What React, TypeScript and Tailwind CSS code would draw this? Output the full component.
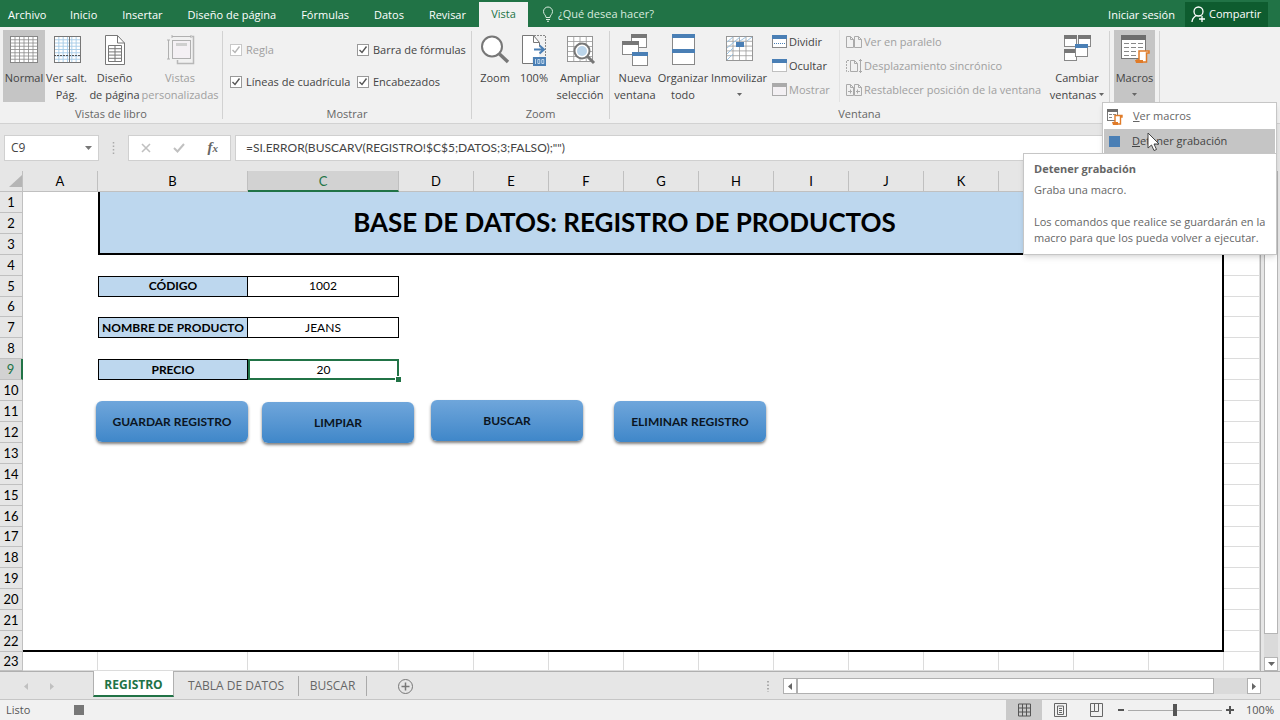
import type { ReactNode } from 'react';

type IconProps = { children: ReactNode; w?: number; h?: number };

const Svg = ({ children, w = 32, h = 32 }: IconProps) => (
  <svg width={w} height={h} viewBox={`0 0 ${w} ${h}`} fill="none" className="shrink-0" aria-hidden="true">
    {children}
  </svg>
);

const grid = (x: number, y: number, cols: number, rows: number, cw: number, rh: number) => {
  let d = '';
  for (let i = 0; i <= cols; i++) d += `M${x + i * cw} ${y}V${y + rows * rh}`;
  for (let i = 0; i <= rows; i++) d += `M${x} ${y + i * rh}H${x + cols * cw}`;
  return d;
};

const NormalIcon = () => (
  <Svg>
    <rect x="2.5" y="2.5" width="27" height="26" fill="#fff" stroke="#777" />
    <path d={grid(2.5, 2.5, 6, 8, 4.5, 3.25)} stroke="#8a8a8a" strokeWidth="0.8" />
  </Svg>
);

const BreaksIcon = () => (
  <Svg>
    <rect x="3.5" y="2.5" width="26" height="26" fill="#fff" />
    <path d={grid(3.5, 2.5, 6, 8, 4.33, 3.25)} stroke="#a5cbe6" strokeWidth="0.9" />
    <rect x="3.5" y="2.5" width="26" height="26" stroke="#777" />
    <path d="M18.5 2V29" stroke="#777" />
    <path d="M3 21.5H30" stroke="#555" strokeDasharray="2 1" />
  </Svg>
);

const PageIcon = () => (
  <Svg>
    <path d="M6.5 1.5H18.5L25.5 9V30.5H6.5Z" fill="#fff" stroke="#777" />
    <path d="M18.5 1.5V9H25.5" stroke="#777" />
    <path d={grid(9.5, 11.5, 2, 5, 6.5, 3.2)} stroke="#777" />
  </Svg>
);

const CustomViewsIcon = () => (
  <Svg>
    <rect x="8.5" y="6.5" width="18" height="18" stroke="#b0b0b0" fill="#f4f0f4" />
    <rect x="12" y="9" width="11" height="3" fill="#cfcfcf" />
    <path d="M8 2.5H27M8 1V4M27 1V4M4.5 6V25M3 6H6M3 25H6" stroke="#b0b0b0" />
    <path d="M28 2.5H29.5V29.5H13.5V26" stroke="#b8b8b8" strokeWidth="1.5" />
  </Svg>
);

const ZoomIcon = () => (
  <Svg>
    <circle cx="13" cy="12.5" r="10" fill="#fff" stroke="#777" strokeWidth="2" />
    <path d="M20.5 20L29 28" stroke="#777" strokeWidth="3.5" />
  </Svg>
);

const HundredIcon = () => (
  <Svg w={28}>
    <path d="M3 2H13L19 9V23H12V29H3Z" fill="#fff" />
    <path d="M19.5 12V8.5L13.5 1.5H2.5V29.5H13" stroke="#777" />
    <path d="M13.5 1.5V8.5H19" stroke="#777" />
    <path d="M14 1.5H25.5V22" stroke="#888" strokeDasharray="2 1" />
    <path d="M14 15.5H23M19.5 11.5L24 15.5L19.5 19.5" stroke="#4a7fb5" strokeWidth="2" />
    <rect x="13" y="23" width="13" height="9" fill="#4a7fb5" />
    <path d="M15.5 25V30M17.8 25.5H19.8V29.5H17.8ZM21.8 25.5H23.8V29.5H21.8Z" stroke="#dcebf7" strokeWidth="0.8" />
  </Svg>
);

const ZoomSelIcon = () => (
  <Svg>
    <rect x="3.5" y="2.5" width="25" height="25" fill="#fff" stroke="#888" />
    <path d={grid(3.5, 2.5, 4, 5, 6.25, 5)} stroke="#999" strokeWidth="0.8" />
    <circle cx="18" cy="17" r="7.5" fill="#fff" stroke="#777" strokeWidth="2" />
    <circle cx="18" cy="17" r="5" fill="#bcd5ea" />
    <path d="M23.5 22.5L30 29" stroke="#777" strokeWidth="3" />
  </Svg>
);

type WinProps = { x: number; y: number; w: number; h: number; color?: string };

const Win = ({ x, y, w, h, color = '#777' }: WinProps) => (
  <>
    <rect x={x + 0.5} y={y + 0.5} width={w - 1} height={h - 1} fill="#fff" stroke="#888" />
    <rect x={x} y={y} width={w} height={4} fill={color} />
  </>
);

const NewWindowIcon = () => (
  <Svg>
    <Win x={12} y={0} w={16} h={14} />
    <Win x={3} y={7} w={17} h={14} />
    <Win x={13} y={18} w={16} h={14} color="#4a7fb5" />
  </Svg>
);

const ArrangeIcon = () => (
  <Svg>
    <Win x={5} y={0} w={23} h={16} color="#4a7fb5" />
    <Win x={5} y={15} w={23} h={16} color="#4a7fb5" />
  </Svg>
);

const FreezeIcon = () => (
  <Svg>
    <rect x="3.5" y="2.5" width="26" height="24" fill="#fff" stroke="#888" />
    <path d={grid(3.5, 2.5, 4, 5, 6.5, 4.8)} stroke="#999" strokeWidth="0.8" />
    <path d="M4 8L10 3M4 14L17 3M4 20L10 14M4 26L10 20M17 7L23 3M24 7L29 3" stroke="#9cc3e2" />
    <rect x="13" y="8" width="8" height="5" fill="#4a7fb5" />
  </Svg>
);

const SwitchIcon = () => (
  <Svg>
    <Win x={3} y={1} w={13} h={12} />
    <Win x={17} y={1} w={13} h={12} />
    <Win x={3} y={15} w={13} h={12} />
    <Win x={14} y={10} w={13} h={13} color="#4a7fb5" />
  </Svg>
);

const MacrosIcon = () => (
  <Svg>
    <rect x="2.5" y="1.5" width="24" height="23" fill="#fff" stroke="#777" />
    <rect x="2" y="1" width="25" height="5" fill="#6d6d6d" />
    <path d="M5 9.5H24M5 13.5H24M5 17.5H18M5 21.5H18" stroke="#888" strokeDasharray="5 2" />
    <path d="M20 17H30V19H27.5V28H18V26H20Z" fill="#fff" stroke="#e07b28" strokeWidth="1.5" />
    <path d="M16 26H24V29H17Z" fill="#e07b28" />
  </Svg>
);

const SmallMacroIcon = () => (
  <Svg w={16} h={18}>
    <rect x="0.5" y="1.5" width="10" height="11" fill="#fff" stroke="#777" />
    <rect x="0" y="1" width="11" height="3" fill="#6d6d6d" />
    <path d="M2 6.5H9M2 9.5H6" stroke="#888" strokeDasharray="3 1" />
    <path d="M8 7.5H15V9H13.5V16H7V14.5H8Z" fill="#fff" stroke="#e07b28" strokeWidth="1.4" />
    <path d="M5 14H11V17H6Z" fill="#e07b28" />
  </Svg>
);

const SmallWin = ({ kind }: { kind: 'split' | 'hide' | 'show' }) => (
  <Svg w={15} h={14}>
    <rect
      x="0.5"
      y="0.5"
      width="14"
      height="12"
      fill={kind === 'show' ? '#f3f0f3' : '#fff'}
      stroke={kind === 'show' ? '#aaa' : '#888'}
      strokeDasharray={kind === 'hide' ? '1 1' : undefined}
    />
    <rect width="15" height="4" fill={kind === 'show' ? '#aaa' : '#4a7fb5'} />
    {kind === 'split' && <path d="M2 8.5H13" stroke="#4a7fb5" strokeDasharray="1 1" />}
  </Svg>
);

const PagePair = ({ kind }: { kind: 'side' | 'sync' | 'reset' }) => (
  <Svg w={16} h={14}>
    {kind === 'sync' ? (
      <>
        <path d="M3 1.5H0.5V12.5H3" stroke="#aaa" strokeDasharray="2 1" />
        <path d="M4.5 1.5H8.5L11.5 4.5V12.5H4.5ZM8.5 1.5V4.5H11.5M14.5 0V14M13 2L14.5 0.5L16 2M13 12L14.5 13.5L16 12" stroke="#aaa" />
      </>
    ) : (
      <path d="M0.5 1.5H4.5L7.5 4.5V12.5H0.5ZM4.5 1.5V4.5H7.5M8.5 1.5H12.5L15.5 4.5V12.5H8.5ZM12.5 1.5V4.5H15.5" stroke="#aaa" />
    )}
    {kind === 'reset' && <path d="M2 8.5H6M10 8.5H14M4.5 6.5V10.5M11.5 6.5V10.5" stroke="#aaa" />}
  </Svg>
);

const Caret = () => (
  <svg width="5" height="3" viewBox="0 0 5 3" className="mb-[3px] inline-block align-baseline" aria-hidden="true">
    <path d="M0 0H5L2.5 3Z" fill="#666" />
  </svg>
);

const TABS = ['Inicio', 'Insertar', 'Diseño de página', 'Fórmulas', 'Datos', 'Revisar'];

const TitleBar = () => (
  <nav className="flex h-[27px] items-end bg-[#217346] text-[11px] text-white">
    <a href="#archivo" className="w-[58px] pb-1 pl-2 leading-4">Archivo</a>
    {TABS.map((tab) => (
      <a key={tab} href="#tab" className="mr-px px-3 pb-1 leading-4 whitespace-nowrap">{tab}</a>
    ))}
    <a href="#vista" className="flex h-[25px] w-[49px] items-center justify-center bg-[#f1f1f1] text-[#217346]">Vista</a>
    <label className="flex flex-1 items-center gap-1 pl-3.5 leading-[26px]">
      <Svg w={12} h={16}>
        <path d="M4 11.5C4 9 1.5 8.5 1.5 5.5A4.5 4.5 0 0 1 10.5 5.5C10.5 8.5 8 9 8 11.5ZM4 13.5H8M5 15.3H7" stroke="#d8ebdf" />
      </Svg>
      <input
        className="w-40 bg-transparent text-white placeholder:text-[#d8ebdf] placeholder:opacity-100"
        placeholder="¿Qué desea hacer?"
        aria-label="¿Qué desea hacer?"
      />
    </label>
    <a href="#sesion" className="pr-2.5 pb-1 leading-4">Iniciar sesión</a>
    <button className="mr-3 flex h-[25px] w-[83px] items-center gap-1 bg-[#0e5c2f] px-1.5">
      <Svg w={14} h={17}>
        <circle cx="7.5" cy="5.5" r="4.5" stroke="#fff" strokeWidth="1.3" />
        <path d="M1 16C1 12.5 3 11 5 9.5M11 10V16M8 13H14" stroke="#fff" strokeWidth="1.3" />
      </Svg>
      Compartir
    </button>
  </nav>
);

type BigButtonProps = { icon: ReactNode; lines: ReactNode[]; width: string; active?: boolean; muted?: boolean };

const BigButton = ({ icon, lines, width, active, muted }: BigButtonProps) => (
  <button className={`flex h-[72px] shrink-0 flex-col items-center pt-1 ${width} ${active ? 'bg-[#c5c5c5]' : ''} ${muted ? 'text-[#a0a0a0]' : ''}`}>
    {icon}
    <span className="mt-[3px] leading-[17px] whitespace-nowrap">
      {lines.map((line, i) => (
        <span key={i} className="block">{line}</span>
      ))}
    </span>
  </button>
);

const Group = ({ title, width, children }: { title: string; width: string; children: ReactNode }) => (
  <section className={`flex shrink-0 flex-col ${width}`}>
    <div className="flex h-[79px] pt-[3px]">{children}</div>
    <h2 className="text-center leading-4 text-[#666]">{title}</h2>
  </section>
);

const Divider = () => <div className="my-1 w-px shrink-0 bg-[#d2d2d2]" />;

const Check = ({ label, muted }: { label: string; muted?: boolean }) => (
  <label className={`flex h-4 items-center gap-1 whitespace-nowrap ${muted ? 'text-[#a0a0a0]' : ''}`}>
    <span className="grid">
      <input
        type="checkbox"
        defaultChecked
        disabled={muted}
        className={`col-start-1 row-start-1 size-3 appearance-none border bg-white ${muted ? 'border-[#c8c8c8]' : 'border-[#999]'}`}
      />
      <svg width="12" height="12" viewBox="0 0 12 12" className="pointer-events-none col-start-1 row-start-1" aria-hidden="true">
        <path d="M2.5 6L5 8.5L9.5 2.5" fill="none" stroke={muted ? '#b5b5b5' : '#555'} strokeWidth="1.4" />
      </svg>
    </span>
    {label}
  </label>
);

const SmallButton = ({ icon, label, muted }: { icon: ReactNode; label: string; muted?: boolean }) => (
  <button className={`flex h-6 items-center gap-0.5 whitespace-nowrap ${muted ? 'text-[#a0a0a0]' : ''}`}>
    {icon}
    {label}
  </button>
);

const MacroMenu = () => (
  <div className="absolute top-[75px] -left-2 z-20 w-[175px] border border-[#c6c6c6] bg-white p-px shadow-md">
    <button className="flex h-[25px] w-full items-center gap-2.5 pl-[3px] text-[#666]">
      <SmallMacroIcon />
      <span><u>V</u>er macros</span>
    </button>
    <button className="flex h-[25px] w-full items-center gap-3 bg-[#c5c5c5] pl-[5px]">
      <span className="size-[11px] bg-[#4a7fb5]" />
      <span><u>D</u>etener grabación</span>
    </button>
    <svg width="13" height="20" viewBox="0 0 13 20" className="absolute top-[29px] left-[44px] z-40" aria-hidden="true">
      <path d="M1 1V16L4.5 13L7 18.5L9.5 17.5L7 12H12Z" fill="#fff" stroke="#444" />
    </svg>
    <div role="tooltip" className="absolute top-[50px] -right-px z-30 w-[254px] border border-[#c6c6c6] bg-white px-2.5 pt-1.5 pb-2 leading-4 text-[#666] shadow-md">
      <p className="leading-[18px] font-bold">Detener grabación</p>
      <p className="mt-1">Graba una macro.</p>
      <p className="mt-4 whitespace-nowrap">
        Los comandos que realice se guardarán en la
        <br />
        macro para que los pueda volver a ejecutar.
      </p>
    </div>
  </div>
);

const Ribbon = () => (
  <div className="flex h-[97px] border-b border-[#d2d2d2] bg-[#f1f1f1] text-[11px] text-[#444]">
    <Group title="Vistas de libro" width="w-[222px]">
      <div className="w-[3px] shrink-0" />
      <BigButton icon={<NormalIcon />} lines={['Normal']} width="w-[42px]" active />
      <BigButton icon={<BreaksIcon />} lines={['Ver salt.', 'Pág.']} width="w-[43px]" />
      <BigButton icon={<PageIcon />} lines={['Diseño', 'de página']} width="w-[53px]" />
      <BigButton icon={<CustomViewsIcon />} lines={['Vistas', 'personalizadas']} width="w-[78px]" muted />
    </Group>
    <Divider />
    <Group title="Mostrar" width="w-[248px]">
      <div className="grid grid-cols-[127px_auto] content-start gap-y-4 pt-3 pl-[7px]">
        <Check label="Regla" muted />
        <Check label="Barra de fórmulas" />
        <Check label="Líneas de cuadrícula" />
        <Check label="Encabezados" />
      </div>
    </Group>
    <Divider />
    <Group title="Zoom" width="w-[137px]">
      <div className="w-1 shrink-0" />
      <BigButton icon={<ZoomIcon />} lines={['Zoom']} width="w-[38px]" />
      <BigButton icon={<HundredIcon />} lines={['100%']} width="w-[40px]" />
      <BigButton icon={<ZoomSelIcon />} lines={['Ampliar', 'selección']} width="w-[52px]" />
    </Group>
    <Divider />
    <Group title="Ventana" width="w-[499px]">
      <div className="w-[3px] shrink-0" />
      <BigButton icon={<NewWindowIcon />} lines={['Nueva', 'ventana']} width="w-[44px]" />
      <BigButton icon={<ArrangeIcon />} lines={['Organizar', 'todo']} width="w-[52px]" />
      <BigButton icon={<FreezeIcon />} lines={['Inmovilizar', <Caret />]} width="w-[60px]" />
      <div className="flex w-[70px] shrink-0 flex-col pl-[3px]">
        <SmallButton icon={<SmallWin kind="split" />} label="Dividir" />
        <SmallButton icon={<SmallWin kind="hide" />} label="Ocultar" />
        <SmallButton icon={<SmallWin kind="show" />} label="Mostrar" muted />
      </div>
      <div className="mb-1 flex w-[206px] shrink-0 flex-col border-l border-[#e2e2e2] pl-1.5">
        <SmallButton icon={<PagePair kind="side" />} label="Ver en paralelo" muted />
        <SmallButton icon={<PagePair kind="sync" />} label="Desplazamiento sincrónico" muted />
        <SmallButton icon={<PagePair kind="reset" />} label="Restablecer posición de la ventana" muted />
      </div>
      <BigButton icon={<SwitchIcon />} lines={['Cambiar', <>ventanas <Caret /></>]} width="w-[64px]" />
    </Group>
    <Divider />
    <div className="relative px-1 pt-[3px]">
      <BigButton icon={<MacrosIcon />} lines={['Macros', <Caret />]} width="w-[41px]" active />
      <MacroMenu />
    </div>
    <Divider />
  </div>
);

const FormulaBar = () => (
  <div className="flex h-[47px] items-center bg-[#e6e6e6] px-1 text-[#444]">
    <div className="flex h-[26px] w-[95px] items-center border border-[#d0d0d0] bg-white px-1.5">
      <input aria-label="Cuadro de nombres" defaultValue="C9" className="w-full min-w-0 text-[12px]" />
      <svg width="7" height="4" viewBox="0 0 7 4" className="shrink-0" aria-hidden="true">
        <path d="M0 0H7L3.5 4Z" fill="#777" />
      </svg>
    </div>
    <svg width="3" height="12" className="mx-[13px] shrink-0" aria-hidden="true">
      <path d="M1.5 0V12" stroke="#aaa" strokeWidth="1.5" strokeDasharray="1.5 2" />
    </svg>
    <div className="flex h-[26px] w-[103px] items-center justify-between border border-[#d0d0d0] bg-white px-3">
      <button aria-label="Cancelar">
        <Svg w={10} h={10}><path d="M1 1L9 9M9 1L1 9" stroke="#c0c0c0" strokeWidth="1.6" /></Svg>
      </button>
      <button aria-label="Introducir">
        <Svg w={12} h={10}><path d="M1 5L4.5 8.5L11 1" stroke="#c0c0c0" strokeWidth="2" /></Svg>
      </button>
      <button aria-label="Insertar función" className="font-['Liberation_Serif',serif] text-[15px] leading-4 font-bold text-[#666] italic">
        f<span className="text-[11px]">x</span>
      </button>
    </div>
    <input
      aria-label="Barra de fórmulas"
      defaultValue={'=SI.ERROR(BUSCARV(REGISTRO!$C$5;DATOS;3;FALSO);"")'}
      className="ml-1 h-[26px] flex-1 border border-[#d0d0d0] bg-white px-2.5 font-[Lato,sans-serif] text-[12px]"
    />
  </div>
);

const COLUMNS = ['A', 'B', 'C', 'D', 'E', 'F', 'G', 'H', 'I', 'J', 'K', 'L', 'M', 'N', ''];
const ROWS = Array.from({ length: 23 }, (_, i) => i + 1);

const FIELDS: Record<number, { label: string; value: string }> = {
  5: { label: 'CÓDIGO', value: '1002' },
  7: { label: 'NOMBRE DE PRODUCTO', value: 'JEANS' },
  9: { label: 'PRECIO', value: '20' },
};

const cellClass = (row: number, col: string) => {
  if (row === 23 || col === '') return 'border-r border-b border-[#dcdcdc]';
  const right = col === 'N' ? 'border-r-2 border-r-black' : '';
  const bottom = row === 22 ? 'border-b-2 border-b-black' : '';
  const title = row <= 3 && col === 'N' ? 'bg-[#bdd7ee]' : '';
  return `${right} ${bottom} ${title}`;
};

const SheetRow = ({ row }: { row: number }) => {
  const field = FIELDS[row];
  const selected = row === 9;
  return (
    <tr className={row === 23 ? 'h-[18px]' : 'h-5'}>
      <th
        scope="row"
        className={`border-b border-[#c0c0c0] text-[13px] font-normal ${selected ? 'border-r-2 border-r-[#217346] bg-[#d2d2d2] text-[#217346]' : 'border-r bg-[#e6e6e6]'}`}
      >
        {row}
      </th>
      {COLUMNS.map((col, i) => {
        // B1:M3 is one merged cell
        if (row <= 3 && i >= 1 && i <= 12) {
          if (row > 1 || i > 1) return null;
          return (
            <td key={i} rowSpan={3} colSpan={12} className="border-b-2 border-l-2 border-black bg-[#bdd7ee] text-[26px] leading-8 font-bold">
              BASE DE DATOS: REGISTRO DE PRODUCTOS
            </td>
          );
        }
        if (field && col === 'B') {
          return <td key={i} className="border border-black bg-[#bdd7ee] font-bold whitespace-nowrap">{field.label}</td>;
        }
        if (field && col === 'C') {
          return (
            <td key={i} className={selected ? 'relative border-2 border-[#217346]' : 'border-y border-r border-black'}>
              {field.value}
              {selected && <span className="absolute -right-1 -bottom-1 size-1.5 border-t border-l border-white bg-[#217346]" />}
            </td>
          );
        }
        return <td key={i} className={cellClass(row, col)} />;
      })}
    </tr>
  );
};

const MACRO_BUTTONS = [
  { label: 'GUARDAR REGISTRO', pos: 'left-[96px] top-[230px]' },
  { label: 'LIMPIAR', pos: 'left-[262px] top-[231px]' },
  { label: 'BUSCAR', pos: 'left-[431px] top-[229px]' },
  { label: 'ELIMINAR REGISTRO', pos: 'left-[614px] top-[230px]' },
];

const Sheet = () => (
  <div className="relative min-w-0 flex-1 border-r border-[#b0b0b0] bg-white">
    <table className="h-full w-full table-fixed border-separate border-spacing-0 text-center font-[Lato,sans-serif] text-[12px] leading-4 text-black">
      <colgroup>
        <col className="w-[23px]" />
        <col className="w-[75px]" />
        <col className="w-[150px]" />
        <col className="w-[151px]" />
        {COLUMNS.slice(3, 14).map((col) => <col key={col} className="w-[75px]" />)}
        <col />
      </colgroup>
      <thead>
        <tr className="h-[21px] bg-[#e6e6e6] text-[13px]">
          <th className="border-r border-b border-[#c0c0c0]">
            <svg width="13" height="12" viewBox="0 0 13 12" className="ml-auto" aria-hidden="true">
              <path d="M13 0V12H0Z" fill="#b5b5b5" />
            </svg>
          </th>
          {COLUMNS.map((col, i) => (
            <th
              key={i}
              scope="col"
              className={`font-normal ${col === 'C' ? 'border-r border-b-2 border-r-[#c0c0c0] border-b-[#217346] bg-[#d2d2d2] text-[#217346]' : 'border-r border-b border-[#c0c0c0]'}`}
            >
              {col}
            </th>
          ))}
        </tr>
      </thead>
      <tbody>
        {ROWS.map((row) => <SheetRow key={row} row={row} />)}
      </tbody>
    </table>
    {MACRO_BUTTONS.map(({ label, pos }) => (
      <button
        key={label}
        className={`absolute h-[41px] w-[152px] rounded-md bg-linear-to-b from-[#6fa6db] to-[#3f87c9] font-[Lato,sans-serif] text-[12px] font-bold text-[#0b1522] shadow-[0_2px_3px_rgba(0,0,0,0.5)] ${pos}`}
      >
        {label}
      </button>
    ))}
  </div>
);

const VerticalScroll = () => (
  <div className="flex w-[19px] shrink-0 flex-col bg-[#e6e6e6] pr-0.5 pl-[3px]">
    <div className="h-[14px] border border-[#b5b5b5] bg-white" />
    <div className="flex-1 border border-[#b5b5b5] bg-white" />
    <div className="h-[23px] bg-[#dadada]" />
    <button aria-label="Desplazar abajo" className="flex h-[14px] items-center justify-center border border-[#b5b5b5] bg-white">
      <svg width="7" height="4" viewBox="0 0 7 4" aria-hidden="true"><path d="M0 0H7L3.5 4Z" fill="#666" /></svg>
    </button>
  </div>
);

const ArrowLeft = ({ color }: { color: string }) => (
  <Svg w={4} h={7}><path d="M4 0V7L0 3.5Z" fill={color} /></Svg>
);

const ArrowRight = ({ color }: { color: string }) => (
  <Svg w={4} h={7}><path d="M0 0V7L4 3.5Z" fill={color} /></Svg>
);

const SheetTabs = () => (
  <div className="flex h-[29px] items-start border-b border-[#c6c6c6] bg-[#e6e6e6] text-[12px] text-[#666]">
    <div className="flex h-[29px] w-[93px] items-center gap-[22px] border-t border-[#b0b0b0] pl-6">
      <ArrowLeft color="#c0c0c0" />
      <ArrowRight color="#c0c0c0" />
    </div>
    <button className="h-[26px] w-[81px] border-x border-b-2 border-x-[#b0b0b0] border-b-[#217346] bg-white pt-1 font-bold text-[#217346]">
      REGISTRO
    </button>
    <div className="flex h-[29px] flex-1 items-center border-t border-[#b0b0b0]">
      <button className="h-5 w-[125px] border-r border-[#aaa]">TABLA DE DATOS</button>
      <button className="h-5 w-[68px] border-r border-[#aaa]">BUSCAR</button>
      <button aria-label="Hoja nueva" className="ml-[30px]">
        <Svg w={17} h={17}>
          <circle cx="8.5" cy="8.5" r="7" stroke="#777" />
          <path d="M4.5 8.5H12.5M8.5 4.5V12.5" stroke="#777" strokeWidth="1.5" />
        </Svg>
      </button>
      <svg width="2" height="11" className="mr-3.5 ml-auto" aria-hidden="true">
        <path d="M1 0V11" stroke="#aaa" strokeWidth="2" strokeDasharray="1.5 2" />
      </svg>
      <div className="mr-[19px] flex h-4 w-[478px] bg-[#dadada]">
        <button aria-label="Desplazar a la izquierda" className="flex w-[14px] items-center justify-center border border-[#b0b0b0] bg-white">
          <ArrowLeft color="#666" />
        </button>
        <div className="mr-[33px] flex-1 border border-[#b0b0b0] bg-white" />
        <button aria-label="Desplazar a la derecha" className="flex w-[14px] items-center justify-center border border-[#b0b0b0] bg-white">
          <ArrowRight color="#666" />
        </button>
      </div>
    </div>
  </div>
);

const StatusBar = () => (
  <footer className="flex h-5 items-center bg-[#f1f1f1] text-[11px] text-[#555]">
    <span className="w-[74px] pl-1.5">Listo</span>
    <button aria-label="Detener grabación" className="size-[10px] bg-[#777]" />
    <button aria-label="Normal" className="ml-auto flex h-5 w-9 items-center justify-center bg-[#cacaca]">
      <Svg w={13} h={14}><path d={grid(0.5, 1, 3, 3, 4, 4)} stroke="#555" /></Svg>
    </button>
    <button aria-label="Diseño de página" className="flex w-9 justify-center">
      <Svg w={13} h={14}>
        <path d="M0.5 0.5H12.5V13.5H0.5ZM3.5 3V11.5H9.5V3ZM5 5.5H8M5 7.5H8M5 9.5H8" stroke="#666" />
      </Svg>
    </button>
    <button aria-label="Salto de página" className="flex w-9 justify-center">
      <Svg w={13} h={14}>
        <path d="M0.5 0.5H12.5V13.5H0.5ZM4.5 1V8.5H0.5M8.5 1V8.5H4.5" stroke="#666" />
      </Svg>
    </button>
    <button aria-label="Alejar" className="ml-1 flex">
      <Svg w={6} h={10}><path d="M0 5H6" stroke="#555" strokeWidth="2" /></Svg>
    </button>
    <input
      type="range"
      aria-label="Zoom"
      min="10"
      max="190"
      defaultValue="100"
      className="mx-1 h-3 w-[94px] appearance-none bg-[linear-gradient(#aaa,#aaa)] bg-[length:100%_1px] bg-center bg-no-repeat [&::-webkit-slider-thumb]:h-3 [&::-webkit-slider-thumb]:w-1 [&::-webkit-slider-thumb]:appearance-none [&::-webkit-slider-thumb]:bg-[#555]"
    />
    <button aria-label="Acercar" className="flex">
      <Svg w={8} h={10}><path d="M0 5H8M4 1V9" stroke="#555" strokeWidth="2" /></Svg>
    </button>
    <span className="w-[46px] pr-1.5 text-right">100%</span>
  </footer>
);

const App = () => (
  <div className="flex h-screen flex-col overflow-hidden bg-[#e6e6e6] font-['Open_Sans',sans-serif]">
    <TitleBar />
    <Ribbon />
    <FormulaBar />
    <main className="flex min-h-0 flex-1">
      <Sheet />
      <VerticalScroll />
    </main>
    <SheetTabs />
    <StatusBar />
  </div>
);

export default App;
